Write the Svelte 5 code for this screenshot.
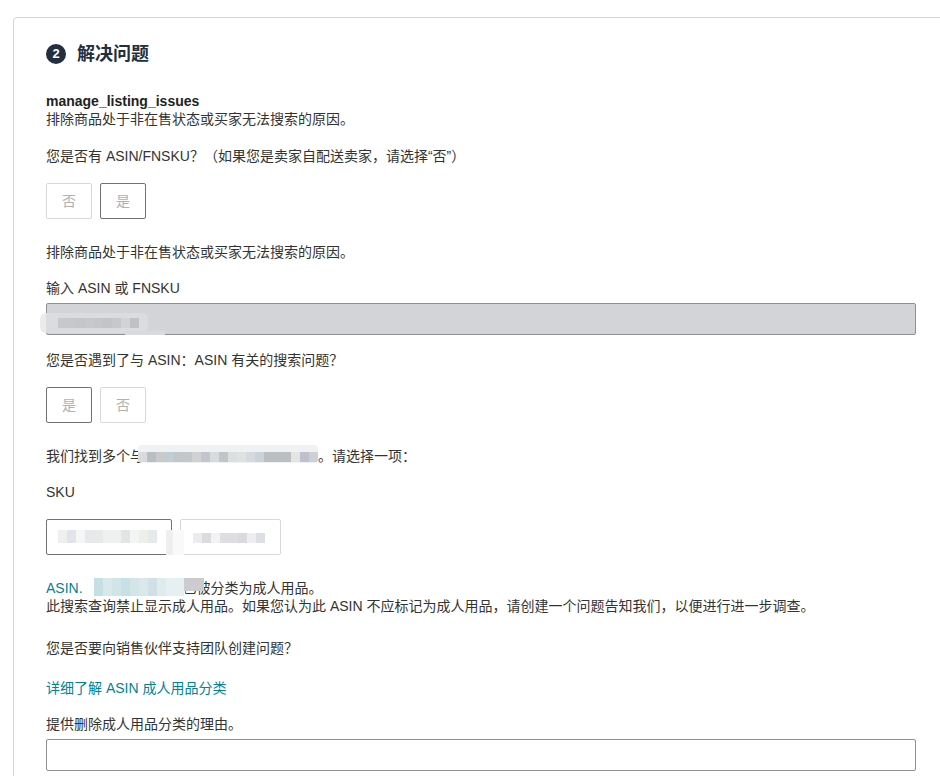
<script lang="ts">
  // pixelated redaction patches that sit over the masked values
  const smudges = [
    { x: 40, y: 313, w: 108, h: 20, top: 5, left: 18, ch: 10, r: 6, glow: 'linear-gradient(90deg, #ebebeb 6px, #dbdcdf 6px)', cells: ['#c6c8cc', '#c6c8cc', '#c4c6ca', '#c6c8cc', '#c4c6ca', '#c2c4c8', '#c6c8cc', '#d2d3d7', '#bfc1c5'] },
    { x: 138, y: 445, w: 180, h: 18, top: 7, left: 0, ch: 10, r: 4, glow: '#f0f1f2', cells: ['#d8dadc', '#b8bfc2', '#c7c9cb', '#bfcdd5', '#c3c6c8', '#c5c6cc', '#cfd1d5', '#c3c5cc', '#d9dadb', '#bfc6c8', '#dcdfdf', '#e0e2e2', '#d5dadf', '#c9d4d8', '#bcbfc2', '#bcbfc2', '#bcbfc2', '#e3e4e6', '#c0c0cb', '#cdd0d3'] },
    { x: 58, y: 530, w: 99, h: 13, top: 0, left: 0, ch: 13, r: 0, glow: '#fff', cells: ['#efefef', '#e2e5e7', '#f5f6f6', '#e8e9ea', '#e8e9ea', '#eff0f0', '#eff0f0', '#e3e5e5', '#f3f4f4', '#efefea', '#e4e9eb'] },
    { x: 193, y: 533, w: 72, h: 10, top: 0, left: 0, ch: 10, r: 0, glow: '#fff', cells: ['#ececee', '#dcdce0', '#f3f3f4', '#dedee2', '#dedee2', '#d9d9de', '#eeeef0', '#dcdfe3'] },
    { x: 84, y: 578, w: 101, h: 18, top: 0, left: 10, ch: 18, r: 0, glow: '#fdfefe', cells: ['#c5dfe3', '#d8e9ec', '#d1e4e7', '#c7e0e5', '#d4e5e8', '#d9e8eb', '#cfe0e6', '#dfecee', '#e6f0f2', '#e6f0f2'] },
    { x: 184, y: 578, w: 20, h: 13, top: 0, left: 0, ch: 13, r: 0, glow: '#cbcbd0', cells: [] }
  ];

  let reason = '';
</script>

{#snippet toggle(labels, active)}
  <div class="toggles">
    {#each labels as label, i}
      <button class="toggle" class:active={i === active} type="button">{label}</button>
    {/each}
  </div>
{/snippet}

<div class="page">
  <section class="card">
    <h2 class="step">
      <span class="step-num">2</span>
      <span>解决问题</span>
    </h2>

    <div class="block intro">
      <strong>manage_listing_issues</strong>
      <p>排除商品处于非在售状态或买家无法搜索的原因。</p>
    </div>

    <p class="question">您是否有 ASIN/FNSKU？（如果您是卖家自配送卖家，请选择“否”）</p>
    {@render toggle(['否', '是'], 1)}

    <p class="after-toggle">排除商品处于非在售状态或买家无法搜索的原因。</p>

    <label class="field-label" for="asin">输入 ASIN 或 FNSKU</label>
    <input id="asin" class="text-input" type="text" disabled />

    <p class="after-input">您是否遇到了与 ASIN：ASIN 有关的搜索问题？</p>
    {@render toggle(['是', '否'], 0)}

    <p class="after-toggle">我们找到多个与<span class="masked-a"></span>。请选择一项：</p>

    <p class="question sku-label">SKU</p>
    <div class="toggles">
      <button class="toggle active sku-a" type="button" aria-label="SKU 1"></button>
      <button class="toggle sku-b" type="button" aria-label="SKU 2"></button>
    </div>

    <div class="after-toggle notice">
      <p><span class="teal">ASIN.</span><span class="masked-b"></span>已被分类为成人用品。</p>
      <p>此搜索查询禁止显示成人用品。如果您认为此 ASIN 不应标记为成人用品，请创建一个问题告知我们，以便进行进一步调查。</p>
    </div>

    <p class="after-toggle">您是否要向销售伙伴支持团队创建问题？</p>

    <a class="learn-more" href="#adult">详细了解 ASIN 成人用品分类</a>

    <label class="field-label" for="reason">提供删除成人用品分类的理由。</label>
    <input id="reason" class="text-input" type="text" bind:value={reason} />
  </section>

  {#each smudges as s}
    <div
      class="smudge"
      style="left:{s.x}px;top:{s.y}px;width:{s.w}px;height:{s.h}px;background:{s.glow};padding:{s.top}px 0 0 {s.left}px;border-radius:{s.r}px"
    >
      {#each s.cells as c}
        <i style="background:{c};height:{s.ch}px"></i>
      {/each}
    </div>
  {/each}
  <div class="smudge gap-patch"></div>
  <div class="smudge input-tail"></div>
</div>

<style>
  :global(body) {
    margin: 0;
    background: #fff;
    overflow: hidden;
  }

  .page {
    position: relative;
    height: 776px;
    overflow: hidden;
    padding: 17px 0 0 13px;
    box-sizing: border-box;
    font-family: "Liberation Sans", "Noto Sans CJK SC", sans-serif;
    font-size: 14px;
    line-height: 18px;
    color: #333;
  }

  .card {
    width: 1000px;
    min-height: 800px;
    box-sizing: border-box;
    border: 1px solid #d5d5d5;
    border-radius: 4px;
    padding: 23px 32px;
    background: #fff;
  }

  p {
    margin: 0;
  }

  .step {
    display: flex;
    align-items: center;
    gap: 11px;
    margin: 0;
    font-size: 18px;
    line-height: 26px;
    font-weight: 700;
    color: #232f3e;
  }

  .step-num {
    width: 20px;
    height: 20px;
    border-radius: 50%;
    background: #232f3e;
    color: #fff;
    font-size: 13px;
    line-height: 20px;
    text-align: center;
  }

  .intro {
    margin-top: 25px;
  }

  .intro strong {
    display: block;
    color: #222;
  }

  .question {
    margin-top: 19px;
  }

  .toggles {
    display: flex;
    gap: 8px;
    margin-top: 18px;
  }

  .toggle {
    height: 36px;
    min-width: 46px;
    padding: 0 15px;
    border: 1px solid #d5d9d9;
    border-radius: 2px;
    background: #fff;
    color: #b0b0b0;
    font: inherit;
  }

  .toggle.active {
    border-color: #6f7373;
  }

  .sku-a {
    width: 126px;
  }

  .sku-b {
    width: 101px;
  }

  .after-toggle {
    margin-top: 24px;
  }

  .field-label {
    display: block;
    margin-top: 18px;
  }

  .text-input {
    display: block;
    width: 870px;
    height: 32px;
    margin-top: 6px;
    box-sizing: border-box;
    border: 1px solid #8d9096;
    border-radius: 2px;
    background: #fff;
    padding: 0 8px;
    font: inherit;
  }

  .text-input:disabled {
    background: #d2d4d8;
  }

  .after-input {
    margin-top: 16px;
  }

  .sku-label {
    margin-top: 18px;
  }

  .teal,
  .learn-more {
    color: #008296;
  }

  .masked-a {
    display: inline-block;
    width: 174px;
  }

  .masked-b {
    display: inline-block;
    width: 100px;
  }

  .learn-more {
    display: block;
    margin-top: 22px;
    text-decoration: none;
  }

  .smudge {
    position: absolute;
    display: flex;
    box-sizing: border-box;
    overflow: hidden;
  }

  .smudge i {
    flex: none;
    width: 9px;
  }

  .gap-patch {
    left: 166px;
    top: 530px;
    width: 18px;
    height: 25px;
    background: linear-gradient(90deg, #efefef 7px, #f9f9f9 7px);
  }

  .input-tail {
    left: 125px;
    top: 331px;
    width: 40px;
    height: 4px;
    background: #d9dadd;
  }
</style>
